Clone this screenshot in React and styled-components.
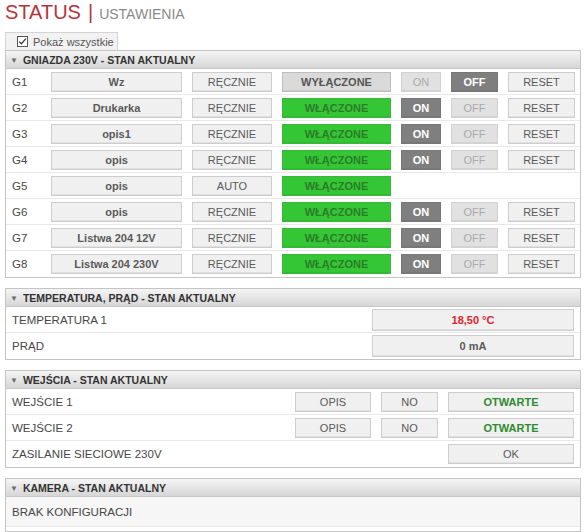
import React from "react";
import styled, { createGlobalStyle, css } from "styled-components";

const GlobalStyle = createGlobalStyle`
  html, body {
    margin: 0;
    padding: 0;
    background: #ffffff;
  }
  body {
    font-family: "Liberation Sans", Arial, sans-serif;
    color: #444;
  }
`;

const Page = styled.div`
  width: 576px;
  padding: 0 5px;
`;

const TitleBar = styled.div`
  display: flex;
  align-items: baseline;
  height: 32px;
  padding-top: 1px;
  box-sizing: border-box;

  .main {
    font-size: 20px;
    color: #b3363d;
  }
  .sep {
    font-size: 20px;
    color: #b3363d;
    margin: 0 6px 0 7px;
  }
  .sub {
    font-size: 14px;
    color: #8a8a8a;
  }
`;

const Tab = styled.div`
  display: inline-flex;
  align-items: center;
  gap: 5px;
  height: 18px;
  width: 113px;
  box-sizing: border-box;
  padding-left: 11px;
  background: #f2f2f2;
  border: 1px solid #d4d4d4;
  border-bottom: none;
  font-size: 11px;
  color: #555;
`;

const TabRow = styled.div`
  display: flex;
`;

const Panel = styled.div`
  border: 1px solid #c4c4c4;
  background: #ffffff;
  margin-bottom: ${(p) => p.$mb || 10}px;
`;

const PanelHeader = styled.div`
  display: flex;
  align-items: center;
  height: 17px;
  padding-left: 4px;
  gap: 5px;
  background: linear-gradient(#f5f5f5, #d6d6d6);
  border-bottom: 1px solid #c8c8c8;
  font-size: 10.5px;
  font-weight: bold;
  color: #333;

  .arrow {
    font-size: 8px;
    color: #6c6c6c;
    margin-top: 1px;
  }
`;

const SocketRow = styled.div`
  display: grid;
  grid-template-columns: 29px 131px 80px 109px 40px 47px 67px;
  column-gap: 10px;
  align-items: center;
  height: 26px;
  box-sizing: border-box;
  padding: 0 5px 0 6px;
  border-bottom: ${(p) => (p.$last ? "none" : "1px solid #e8e8e8")};
`;

const InfoRow = styled.div`
  display: flex;
  align-items: center;
  gap: 10px;
  height: ${(p) => p.$h || 26}px;
  box-sizing: border-box;
  padding: 0 6px 0 6px;
  background: ${(p) => p.$bg || "#ffffff"};
  border-bottom: ${(p) => (p.$last ? "none" : "1px solid #e8e8e8")};
`;

const Label = styled.span`
  font-size: 11.5px;
  color: #474747;
  flex: 1;
`;

const tones = {
  plain: css`
    background: #f0f0f0;
    color: #5a5a5a;
    border-color: #cdcdcd;
  `,
  off: css`
    background: #dadada;
    color: #555;
    font-weight: bold;
    border-color: #bdbdbd;
  `,
  green: css`
    background: #35c635;
    color: #2b7d2b;
    font-weight: bold;
    border-color: #3ab83a;
  `,
  active: css`
    background: #7f7f7f;
    color: #ffffff;
    font-weight: bold;
    border-color: #777;
  `,
  idle: css`
    background: #e1e1e1;
    color: #aaaaaa;
    border-color: #d2d2d2;
  `,
};

const Btn = styled.div`
  display: flex;
  align-items: center;
  justify-content: center;
  height: ${(p) => p.$h || 20}px;
  width: ${(p) => (p.$w ? p.$w + "px" : "auto")};
  box-sizing: border-box;
  border: 1px solid;
  font-size: 11px;
  white-space: nowrap;
  box-shadow: inset 0 -1px 0 rgba(0, 0, 0, 0.06);
  ${(p) => tones[p.$tone || "plain"]}
  ${(p) => p.$bold && "font-weight: bold;"}
  ${(p) => p.$color && `color: ${p.$color};`}
`;

const Check = () => (
  <svg width="11" height="11" viewBox="0 0 11 11">
    <rect x="0.5" y="0.5" width="10" height="10" fill="#fff" stroke="#555" />
    <path d="M2.2 5.6 L4.4 7.8 L8.8 2.6" fill="none" stroke="#333" strokeWidth="1.3" />
  </svg>
);

const sockets = [
  { id: "G1", name: "Wz", mode: "RĘCZNIE", on: false },
  { id: "G2", name: "Drukarka", mode: "RĘCZNIE", on: true },
  { id: "G3", name: "opis1", mode: "RĘCZNIE", on: true },
  { id: "G4", name: "opis", mode: "RĘCZNIE", on: true },
  { id: "G5", name: "opis", mode: "AUTO", on: true, auto: true },
  { id: "G6", name: "opis", mode: "RĘCZNIE", on: true },
  { id: "G7", name: "Listwa 204 12V", mode: "RĘCZNIE", on: true },
  { id: "G8", name: "Listwa 204 230V", mode: "RĘCZNIE", on: true },
];

function Header({ children }) {
  return (
    <PanelHeader>
      <span className="arrow">▼</span>
      {children}
    </PanelHeader>
  );
}

export default function App() {
  return (
    <Page>
      <GlobalStyle />
      <TitleBar>
        <span className="main">STATUS</span>
        <span className="sep">|</span>
        <span className="sub">USTAWIENIA</span>
      </TitleBar>
      <TabRow>
        <Tab>
          <Check />
          Pokaż wszystkie
        </Tab>
      </TabRow>

      <Panel>
        <Header>GNIAZDA 230V - STAN AKTUALNY</Header>
        {sockets.map((s, i) => (
          <SocketRow key={s.id} $last={i === sockets.length - 1}>
            <Label>{s.id}</Label>
            <Btn $bold>{s.name}</Btn>
            <Btn>{s.mode}</Btn>
            <Btn $tone={s.on ? "green" : "off"}>{s.on ? "WŁĄCZONE" : "WYŁĄCZONE"}</Btn>
            {!s.auto && (
              <>
                <Btn $tone={s.on ? "active" : "idle"}>ON</Btn>
                <Btn $tone={s.on ? "idle" : "active"}>OFF</Btn>
                <Btn>RESET</Btn>
              </>
            )}
          </SocketRow>
        ))}
      </Panel>

      <Panel>
        <Header>TEMPERATURA, PRĄD - STAN AKTUALNY</Header>
        <InfoRow>
          <Label>TEMPERATURA 1</Label>
          <Btn $w={202} $h={22} $bold $color="#e0232b">18,50 °C</Btn>
        </InfoRow>
        <InfoRow $last>
          <Label>PRĄD</Label>
          <Btn $w={202} $h={22} $bold>0 mA</Btn>
        </InfoRow>
      </Panel>

      <Panel>
        <Header>WEJŚCIA - STAN AKTUALNY</Header>
        {["WEJŚCIE 1", "WEJŚCIE 2"].map((w) => (
          <InfoRow key={w}>
            <Label>{w}</Label>
            <Btn $w={76}>OPIS</Btn>
            <Btn $w={57}>NO</Btn>
            <Btn $w={126} $bold $color="#2e8b2e">OTWARTE</Btn>
          </InfoRow>
        ))}
        <InfoRow $last>
          <Label>ZASILANIE SIECIOWE 230V</Label>
          <Btn $w={126}>OK</Btn>
        </InfoRow>
      </Panel>

      <Panel $mb={4}>
        <Header>KAMERA - STAN AKTUALNY</Header>
        <InfoRow $h={30} $bg="#f6f6f6">
          <Label>BRAK KONFIGURACJI</Label>
        </InfoRow>
        <div style={{ height: 4 }} />
      </Panel>
    </Page>
  );
}
